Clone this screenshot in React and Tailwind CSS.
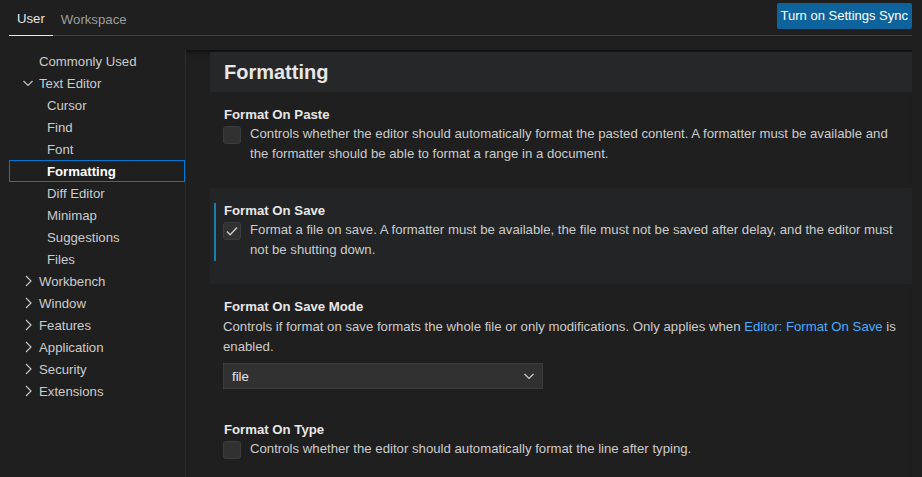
import React from 'react';

const Chevron = ({ down = false, className = '' }) => (
  <svg width="16" height="16" viewBox="0 0 16 16" className={className} fill="none" stroke="currentColor" strokeWidth="1.2">
    {down ? <path d="M3.5 6l4.5 4.5L12.5 6" /> : <path d="M6 3l5 5-5 5" />}
  </svg>
);

const Checkbox = ({ checked = false }) => (
  <div className="w-[18px] h-[18px] shrink-0 rounded-[3px] bg-[#313131] border border-[#3c3c3c] flex items-center justify-center text-[#cccccc]">
    {checked && (
      <svg width="16" height="16" viewBox="0 0 16 16" fill="none" stroke="currentColor" strokeWidth="1.4">
        <path d="M3 8.5l3.2 3.2L13 4.6" />
      </svg>
    )}
  </div>
);

const tree = [
  { label: 'Commonly Used', level: 0 },
  { label: 'Text Editor', level: 0, chevron: 'down' },
  { label: 'Cursor', level: 1 },
  { label: 'Find', level: 1 },
  { label: 'Font', level: 1 },
  { label: 'Formatting', level: 1, selected: true },
  { label: 'Diff Editor', level: 1 },
  { label: 'Minimap', level: 1 },
  { label: 'Suggestions', level: 1 },
  { label: 'Files', level: 1 },
  { label: 'Workbench', level: 0, chevron: 'right' },
  { label: 'Window', level: 0, chevron: 'right' },
  { label: 'Features', level: 0, chevron: 'right' },
  { label: 'Application', level: 0, chevron: 'right' },
  { label: 'Security', level: 0, chevron: 'right' },
  { label: 'Extensions', level: 0, chevron: 'right' },
];

const SettingTitle = ({ children }) => (
  <div className="h-[18px] leading-[18px] pt-px font-bold text-[#e7e7e7]">{children}</div>
);

const CheckSetting = ({ title, lines, checked, focused }) => (
  <div className={`relative h-[96px] pt-[13px] pl-[14px] ${focused ? 'bg-[#232425]' : ''}`}>
    {/* focus indicator */}
    {focused && <span className="absolute left-[4px] top-[15px] w-[2px] h-[58px] bg-[#1a7fae]" />}
    <SettingTitle>{title}</SettingTitle>
    <div className="flex mt-[3px] -ml-px">
      <Checkbox checked={checked} />
      <div className="ml-[9px] -mt-[2px] leading-[20px] whitespace-nowrap">
        {lines.map((l) => (
          <div key={l}>{l}</div>
        ))}
      </div>
    </div>
  </div>
);

export default function App() {
  return (
    <div className="w-[922px] h-[477px] overflow-hidden bg-[#1f1f1f] pl-[9px] pr-[10px] text-[13.2px] text-[#cccccc] font-['Liberation_Sans',Arial,sans-serif]">
      {/* header */}
      <div className="flex justify-between h-[36px] border-b border-[#424242]">
        <div className="flex">
          <div className="h-[36px] px-[8px] flex items-center text-[#e7e7e7] border-b border-[#e7e7e7] pt-[3px]">User</div>
          <div className="h-[36px] px-[8px] flex items-center text-[#9d9d9d] pt-[3px]">Workspace</div>
        </div>
        <button className="mt-[3px] h-[26px] px-[4px] bg-[#0e639c] text-white rounded-[2px] text-[13px]">Turn on Settings Sync</button>
      </div>

      <div className="flex pt-[14px] h-[441px]">
        {/* sidebar */}
        <div className="w-[177px] shrink-0 border-r border-[#2b2b2b]">
          {tree.map((item) => (
            <div
              key={item.label}
              className={`h-[22px] flex items-center ${item.selected ? 'outline outline-1 -outline-offset-1 outline-[#0078d4] font-bold text-white' : ''}`}
            >
              <div className="w-[11px] shrink-0" />
              <div className="w-[16px] h-[16px] shrink-0 text-[#c5c5c5]">
                {item.chevron && <Chevron down={item.chevron === 'down'} />}
              </div>
              <span className={`mt-[2px] ${item.level === 1 ? 'ml-[11px]' : 'ml-[3px]'}`}>{item.label}</span>
            </div>
          ))}
        </div>

        {/* content */}
        <div className="flex-1 pl-[24px] shadow-[inset_0_6px_6px_-6px_#000]">
          <div className="mt-[2px] h-[40px] bg-[#262729] pl-[14px] flex items-center text-[20px] font-semibold text-[#e7e7e7]">
            Formatting
          </div>

          <CheckSetting
            title="Format On Paste"
            lines={[
              'Controls whether the editor should automatically format the pasted content. A formatter must be available and',
              'the formatter should be able to format a range in a document.',
            ]}
          />
          <CheckSetting
            title="Format On Save"
            checked
            focused
            lines={[
              'Format a file on save. A formatter must be available, the file must not be saved after delay, and the editor must',
              'not be shutting down.',
            ]}
          />

          <div className="h-[123px] pt-[13px] pl-[14px]">
            <SettingTitle>Format On Save Mode</SettingTitle>
            <div className="-ml-px mt-[2px] leading-[20px] whitespace-nowrap">
              <div>
                Controls if format on save formats the whole file or only modifications. Only applies when{' '}
                <span className="text-[#4daafc]">Editor: Format On Save</span> is
              </div>
              <div>enabled.</div>
            </div>
            <div className="-ml-px mt-[6px] w-[320px] h-[26px] bg-[#313131] border border-[#3c3c3c] flex items-center justify-between pl-[8px] pr-[5px] text-[#e7e7e7]">
              <span className="mt-px">file</span>
              <Chevron down className="text-[#cccccc]" />
            </div>
          </div>

          <CheckSetting
            title="Format On Type"
            lines={['Controls whether the editor should automatically format the line after typing.']}
          />
        </div>
      </div>
    </div>
  );
}
